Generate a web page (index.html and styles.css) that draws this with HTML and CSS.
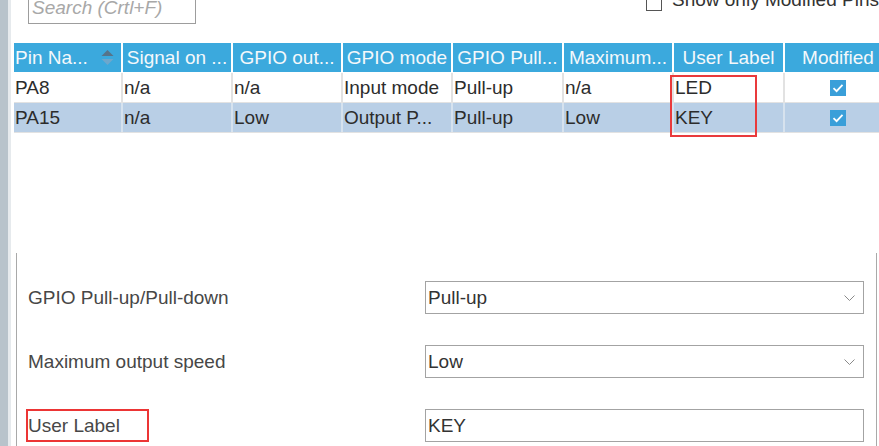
FILE: index.html
```html
<!DOCTYPE html>
<html>
<head>
<meta charset="utf-8">
<link rel="stylesheet" href="styles.css">
</head>
<body>
<div class="rail"></div>
<main class="main">
  <div class="toolbar">
    <div class="search">Search (Crtl+F)</div>
    <div class="filter"><span class="box"></span><span class="filter-text">Show only Modified Pins</span></div>
  </div>
  <div class="table">
    <div class="row head">
      <div class="cell left sortable"><span>Pin Na...</span>
        <svg class="sort" width="13" height="16" viewBox="0 0 13 16"><path d="M6.5 0 L12.5 6 L0.5 6 Z" fill="#56748a"/><path d="M0.5 9 L12.5 9 L6.5 15 Z" fill="#6da7cc"/></svg>
      </div>
      <div class="cell">Signal on ...</div>
      <div class="cell">GPIO out...</div>
      <div class="cell">GPIO mode</div>
      <div class="cell">GPIO Pull...</div>
      <div class="cell">Maximum...</div>
      <div class="cell">User Label</div>
      <div class="cell">Modified</div>
    </div>
    <div class="row">
      <div class="cell">PA8</div>
      <div class="cell">n/a</div>
      <div class="cell">n/a</div>
      <div class="cell">Input mode</div>
      <div class="cell">Pull-up</div>
      <div class="cell">n/a</div>
      <div class="cell">LED</div>
      <div class="cell center"><span class="check"><svg width="16" height="16" viewBox="0 0 16 16"><path d="M3.5 8.2 L6.6 11.2 L12.5 4.8" fill="none" stroke="#fff" stroke-width="1.8"/></svg></span></div>
    </div>
    <div class="row sel">
      <div class="cell">PA15</div>
      <div class="cell">n/a</div>
      <div class="cell">Low</div>
      <div class="cell">Output P...</div>
      <div class="cell">Pull-up</div>
      <div class="cell">Low</div>
      <div class="cell">KEY</div>
      <div class="cell center"><span class="check"><svg width="16" height="16" viewBox="0 0 16 16"><path d="M3.5 8.2 L6.6 11.2 L12.5 4.8" fill="none" stroke="#fff" stroke-width="1.8"/></svg></span></div>
    </div>
    <div class="annot"></div>
  </div>
  <section class="panel">
    <div class="form">
      <span class="lbl">GPIO Pull-up/Pull-down</span>
      <div class="field select"><span>Pull-up</span><svg width="11" height="6" viewBox="0 0 11 6"><path d="M0.5 0.5 L5.5 5.5 L10.5 0.5" fill="none" stroke="#8a8a8a" stroke-width="1"/></svg></div>
      <span class="lbl">Maximum output speed</span>
      <div class="field select"><span>Low</span><svg width="11" height="6" viewBox="0 0 11 6"><path d="M0.5 0.5 L5.5 5.5 L10.5 0.5" fill="none" stroke="#8a8a8a" stroke-width="1"/></svg></div>
      <span class="lbl hl">User Label</span>
      <div class="field"><span>KEY</span></div>
    </div>
  </section>
</main>
</body>
</html>
```

FILE: styles.css
```css
html, body {
  margin: 0;
  padding: 0;
}
body {
  width: 879px;
  height: 446px;
  overflow: hidden;
  display: flex;
  background: #fff;
  font-family: "Liberation Sans", Arial, sans-serif;
  font-size: 19px;
  color: #2c2c2c;
}
.rail {
  width: 8px;
  flex: none;
  background: #b8c3cb;
  border-right: 3px solid #e6eaed;
}
.main {
  flex: 1;
  min-width: 0;
  display: flex;
  flex-direction: column;
  padding-left: 3px;
}
.toolbar {
  height: 51px;
  margin-top: -8px;
  display: flex;
  align-items: flex-start;
  flex: none;
}
.search {
  margin-left: 14px;
  width: 168px;
  height: 32px;
  box-sizing: border-box;
  border: 1px solid #9d9d9d;
  padding-left: 3px;
  line-height: 30px;
  font-style: italic;
  color: #a8a8a8;
  white-space: nowrap;
}
.filter {
  margin-left: 450px;
  margin-top: -3px;
  display: flex;
  align-items: flex-start;
  gap: 10px;
  line-height: 22px;
  white-space: nowrap;
  color: #333;
}
.filter .box {
  width: 16px;
  height: 16px;
  margin-top: 6px;
  box-sizing: border-box;
  border: 1px solid #555;
  background: #fff;
  flex: none;
}
.table {
  position: relative;
  width: max-content;
  flex: none;
}
.row {
  display: grid;
  grid-template-columns: 107px 108px 108px 108px 109px 108px 109px 106px;
  column-gap: 2px;
  height: 29px;
  background: #e2e2e2;
  border-bottom: 1px solid #e2e2e2;
}
.row .cell {
  background: #fff;
  line-height: 30px;
  padding: 0 1px;
  white-space: nowrap;
  overflow: hidden;
}
.row.head {
  background: #fff;
  border-bottom: 1px solid #fff;
}
.row.head .cell {
  background: #3ba9dd;
  color: #f4f8fb;
  text-align: center;
  line-height: 29px;
}
.row.head .cell.left {
  text-align: left;
}
.sortable {
  display: flex;
  align-items: center;
  justify-content: space-between;
  padding-right: 7px !important;
}
.sort {
  display: block;
}
.row.sel {
  background: #d6e2ee;
}
.row.sel .cell {
  background: #b9cfe6;
}
.cell.center {
  text-align: center;
  display: flex;
  align-items: center;
  justify-content: center;
}
.check {
  width: 16px;
  height: 16px;
  background: #3a9fd9;
  display: block;
}
.check svg {
  display: block;
}
.annot {
  position: absolute;
  left: 656px;
  top: 32px;
  width: 87px;
  height: 62px;
  box-sizing: border-box;
  border: 2px solid #e93a3c;
}
.panel {
  flex: 1;
  margin: 120px 2px 0 2px;
  border-left: 1px solid #a9a9a9;
  border-right: 1px solid #a9a9a9;
  padding: 28px 12px 0 9px;
}
.form {
  display: grid;
  grid-template-columns: 399px 439px;
  grid-auto-rows: 33px;
  row-gap: 31px;
  align-items: center;
}
.lbl {
  justify-self: start;
  height: 33px;
  box-sizing: border-box;
  border: 2px solid transparent;
  line-height: 29px;
  color: #474747;
  white-space: nowrap;
}
.lbl.hl {
  border-color: #ec3535;
  padding-right: 27px;
}
.field {
  height: 33px;
  box-sizing: border-box;
  border: 1px solid #a3a3a3;
  padding: 0 8px 0 2px;
  display: flex;
  align-items: center;
  justify-content: space-between;
  color: #333;
}
.field svg {
  display: block;
}
```
